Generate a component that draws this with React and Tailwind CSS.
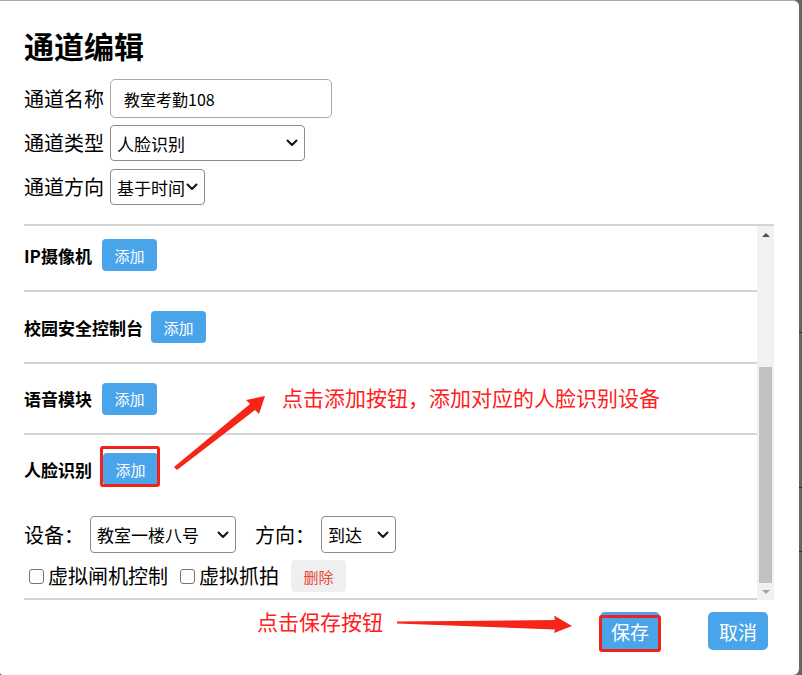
import React from "react";

function Chevron() {
  return (
    <svg width="12" height="8" viewBox="0 0 12 8" className="shrink-0">
      <path d="M1.5 1.5 L6 6 L10.5 1.5" fill="none" stroke="#111" strokeWidth="2" strokeLinecap="round" strokeLinejoin="round" />
    </svg>
  );
}

function FakeSelect({ value, className }) {
  return (
    <div className={"flex items-center justify-between border border-[#8c8c8c] rounded-[4px] bg-white pl-[6px] pr-[6px] text-[17px] text-black " + className}>
      <span className="leading-none">{value}</span>
      <Chevron />
    </div>
  );
}

function AddBtn({ className = "" }) {
  return (
    <button className={"w-[55px] h-[32px] rounded-[4px] bg-[#4aa4ea] text-white text-[15px] leading-none flex items-center justify-center " + className}>
      添加
    </button>
  );
}

function CheckBox({ label }) {
  return (
    <div className="flex items-center">
      <span className="w-[15px] h-[15px] border border-[#767676] rounded-[3px] bg-white" />
      <span className="ml-[4px] text-[20px] leading-none">{label}</span>
    </div>
  );
}

export default function App() {
  return (
    <div className="relative w-[802px] h-[675px] bg-[#666666] flex overflow-hidden font-['Noto_Sans_CJK_SC','Noto_Sans',sans-serif] text-black">
      <div className="w-[799px] h-[675px] shrink-0 bg-white rounded-tr-[6px] rounded-br-[6px] rounded-bl-[3px] border-t border-[#a9a9a9] flex flex-col pl-[24px]">
        <h1 className="mt-[26px] text-[30px] leading-[36px] font-bold">通道编辑</h1>

        <div className="mt-[16px] flex items-center h-[39px]">
          <span className="text-[20px] leading-none w-[86px]">通道名称</span>
          <div className="w-[222px] h-[39px] border border-[#a9a9a9] rounded-[5px] pl-[13px] flex items-center text-[16px]">
            教室考勤108
          </div>
        </div>

        <div className="mt-[7px] flex items-center h-[36px]">
          <span className="text-[20px] leading-none w-[86px]">通道类型</span>
          <FakeSelect value="人脸识别" className="w-[195px] h-[36px]" />
        </div>

        <div className="mt-[8px] flex items-center h-[36px]">
          <span className="text-[20px] leading-none w-[86px]">通道方向</span>
          <FakeSelect value="基于时间" className="w-[95px] h-[36px]" />
        </div>

        <div className="mt-[19px] w-[750px] border-t-2 border-[#d4d4d4] flex">
          <div className="w-[733px] flex flex-col">
            <div className="h-[66px] pt-[13px] border-b-2 border-[#d4d4d4] flex items-start">
              <div className="flex items-center h-[32px]">
                <span className="text-[17px] font-bold leading-none">IP摄像机</span>
                <AddBtn className="ml-[10px]" />
              </div>
            </div>
            <div className="h-[72px] border-b-2 border-[#d4d4d4] flex items-center">
              <span className="text-[17px] font-bold leading-none">校园安全控制台</span>
              <AddBtn className="ml-[8px]" />
            </div>
            <div className="h-[71px] border-b-2 border-[#d4d4d4] flex items-center">
              <span className="text-[17px] font-bold leading-none">语音模块</span>
              <AddBtn className="ml-[10px]" />
            </div>
            <div className="pt-[18px] pb-[6px] border-b-2 border-[#d4d4d4] flex flex-col">
              <div className="flex items-center h-[32px]">
                <span className="text-[17px] font-bold leading-none">人脸识别</span>
                <AddBtn className="ml-[11px]" />
              </div>
              <div className="mt-[31px] flex items-center h-[37px]">
                <span className="text-[20px] leading-none w-[66px]">设备：</span>
                <FakeSelect value="教室一楼八号" className="w-[146px] h-[37px]" />
                <span className="ml-[19px] text-[20px] leading-none w-[66px]">方向：</span>
                <FakeSelect value="到达" className="w-[75px] h-[37px]" />
              </div>
              <div className="mt-[7px] flex items-center h-[32px] pl-[5px]">
                <CheckBox label="虚拟闸机控制" />
                <div className="ml-[12px]">
                  <CheckBox label="虚拟抓拍" />
                </div>
                <button className="ml-[12px] w-[55px] h-[32px] rounded-[4px] bg-[#efefef] text-[#e8473a] text-[15px] leading-none flex items-center justify-center">
                  删除
                </button>
              </div>
            </div>
          </div>
          <div className="w-[17px] bg-[#f1f1f1] flex flex-col">
            <div className="h-[17px] flex items-center justify-center">
              <span className="w-0 h-0 border-l-[4px] border-r-[4px] border-b-[4px] border-l-transparent border-r-transparent border-b-[#505050]" />
            </div>
            <div className="flex-1 flex flex-col justify-end px-[2px]">
              <div className="h-[216px] bg-[#c1c1c1]" />
            </div>
            <div className="h-[17px] flex items-center justify-center">
              <span className="w-0 h-0 border-l-[4px] border-r-[4px] border-t-[4px] border-l-transparent border-r-transparent border-t-[#a3a3a3]" />
            </div>
          </div>
        </div>

        <div className="flex-1 flex justify-end items-start pt-[12px] pr-[31px]">
          <button className="w-[60px] h-[38px] rounded-[5px] bg-[#4aa4ea] text-white text-[19px] leading-none flex items-center justify-center">
            保存
          </button>
          <button className="ml-[48px] w-[60px] h-[38px] rounded-[5px] bg-[#4aa4ea] text-white text-[19px] leading-none flex items-center justify-center">
            取消
          </button>
        </div>
      </div>

      <div className="flex-1 flex flex-col">
        <div className="h-[332px]" />
        <div className="h-px bg-[#2a2a2a]" />
        <div className="h-[154px]" />
        <div className="h-px bg-[#2a2a2a]" />
        <div className="h-[63px]" />
        <div className="h-px bg-[#2a2a2a]" />
      </div>

      {/* annotations */}
      <div className="absolute left-[282px] top-[383px] text-[21px] leading-[28px] text-[#ff2020] whitespace-nowrap">
        点击添加按钮，添加对应的人脸识别设备
      </div>
      <div className="absolute left-[257px] top-[607px] text-[21px] leading-[28px] text-[#ff2020] whitespace-nowrap">
        点击保存按钮
      </div>
      <div className="absolute left-[100px] top-[446px] w-[60px] h-[41px] border-[3px] border-[#f0221a] rounded-[3px]" />
      <div className="absolute left-[599px] top-[615px] w-[62px] h-[37px] border-[3px] border-[#f0221a] rounded-[3px]" />
      <svg className="absolute left-0 top-0 pointer-events-none" width="802" height="675" viewBox="0 0 802 675">
        <polygon points="174,467 250,404 246,400 265,396 259,414 255,410 177,470" fill="#f52519" />
        <polygon points="397,621.5 555,620 554,615.5 572,626 554,633 555,629.5 397,623.5" fill="#f52519" />
      </svg>
    </div>
  );
}
